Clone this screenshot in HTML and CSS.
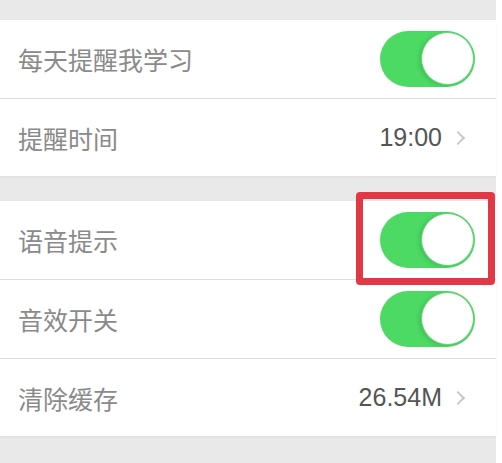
FILE: index.html
```html
<!DOCTYPE html>
<html lang="zh-CN">
<head>
<meta charset="utf-8">
<title>设置</title>
<link rel="stylesheet" href="styles.css">
</head>
<body>
<div class="page">
  <div class="group">
    <div class="row">
      <span class="label">每天提醒我学习</span>
      <span class="switch on"><span class="knob"></span></span>
    </div>
    <div class="row">
      <span class="label">提醒时间</span>
      <span class="value">19:00<span class="chev"></span></span>
    </div>
  </div>
  <div class="group">
    <div class="row">
      <span class="label">语音提示</span>
      <span class="switch on highlighted"><span class="knob"></span><span class="mark"></span></span>
    </div>
    <div class="row">
      <span class="label">音效开关</span>
      <span class="switch on"><span class="knob"></span></span>
    </div>
    <div class="row">
      <span class="label">清除缓存</span>
      <span class="value">26.54M<span class="chev"></span></span>
    </div>
  </div>
</div>
</body>
</html>
```

FILE: styles.css
```css
html, body {
  margin: 0;
  padding: 0;
  background: #ffffff;
}
body {
  font-family: "Liberation Sans", "Noto Sans CJK SC", sans-serif;
}
.page {
  width: 496px;
  height: 463px;
  background: #e9e9e9;
  padding-top: 20px;
  box-sizing: border-box;
  display: flex;
  flex-direction: column;
  gap: 25px;
}
.group {
  background: #ffffff;
  box-shadow: 0 1px 3px rgba(0, 0, 0, 0.05);
}
.row {
  height: 78px;
  display: flex;
  align-items: center;
  justify-content: space-between;
  padding: 0 21px 0 18px;
  border-bottom: 1px solid #dedede;
}
.row:last-child {
  border-bottom: none;
  height: 77px;
}
.label {
  font-family: "Noto Sans CJK SC", sans-serif;
  font-size: 25px;
  color: #8a8a8a;
}
.value {
  font-size: 25px;
  color: #555555;
  display: flex;
  align-items: center;
}
.chev {
  width: 8px;
  height: 8px;
  border-top: 2px solid #c8c8c8;
  border-right: 2px solid #c8c8c8;
  transform: rotate(45deg);
  margin-left: 11px;
  margin-right: 12px;
}
.switch {
  position: relative;
  width: 95px;
  height: 56px;
  border-radius: 28px;
  background: #4cd964;
  flex-shrink: 0;
}
.knob {
  position: absolute;
  top: 1px;
  right: 1px;
  width: 51px;
  height: 51px;
  border-radius: 50%;
  background: #ffffff;
  border: 1.5px solid #5bd670;
  box-shadow: -2px 1px 4px rgba(0, 0, 0, 0.12);
}
.mark {
  position: absolute;
  left: -24px;
  top: -20px;
  width: 125px;
  height: 79px;
  border: 7px solid #e23744;
  border-radius: 4px;
}
```
